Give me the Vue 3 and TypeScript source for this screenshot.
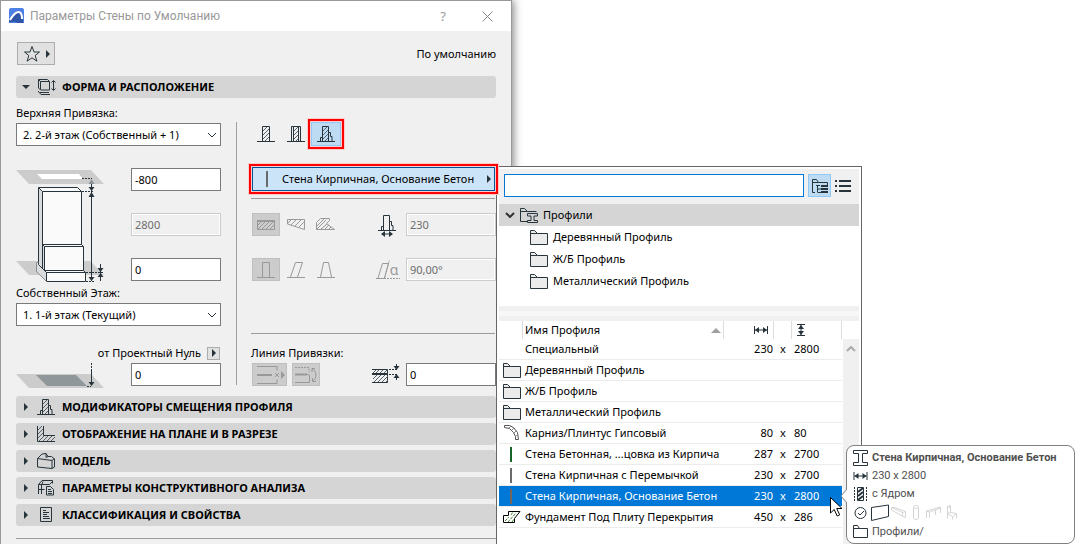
<script setup lang="ts">
import { ref } from 'vue'

interface ProfileRow {
  name: string
  icon: 'none' | 'folder' | 'cornice' | 'slab' | 'bar-green' | 'bar-grey' | 'bar-brick'
  w?: number
  h?: number
}

const topLink = ref('2. 2-й этаж (Собственный + 1)')
const homeStory = ref('1. 1-й этаж (Текущий)')
const topOffset = ref('-800')
const wallHeight = ref('2800')
const baseOffset = ref('0')
const baseElevation = ref('0')
const thickness = ref('230')
const angle = ref('90,00°')
const lineOffset = ref('0')
const query = ref('')
const selected = ref('Стена Кирпичная, Основание Бетон')

const sections = [
  { icon: 'i-profile', title: 'МОДИФИКАТОРЫ СМЕЩЕНИЯ ПРОФИЛЯ' },
  { icon: 'i-plan', title: 'ОТОБРАЖЕНИЕ НА ПЛАНЕ И В РАЗРЕЗЕ' },
  { icon: 'i-model', title: 'МОДЕЛЬ' },
  { icon: 'i-analysis', title: 'ПАРАМЕТРЫ КОНСТРУКТИВНОГО АНАЛИЗА' },
  { icon: 'i-class', title: 'КЛАССИФИКАЦИЯ И СВОЙСТВА' },
]

const folders = ['Деревянный Профиль', 'Ж/Б Профиль', 'Металлический Профиль']

const rows: ProfileRow[] = [
  { name: 'Специальный', icon: 'none', w: 230, h: 2800 },
  { name: 'Деревянный Профиль', icon: 'folder' },
  { name: 'Ж/Б Профиль', icon: 'folder' },
  { name: 'Металлический Профиль', icon: 'folder' },
  { name: 'Карниз/Плинтус Гипсовый', icon: 'cornice', w: 80, h: 80 },
  { name: 'Стена Бетонная, ...цовка из Кирпича', icon: 'bar-green', w: 287, h: 2700 },
  { name: 'Стена Кирпичная с Перемычкой', icon: 'bar-grey', w: 230, h: 2700 },
  { name: 'Стена Кирпичная, Основание Бетон', icon: 'bar-brick', w: 230, h: 2800 },
  { name: 'Фундамент Под Плиту Перекрытия', icon: 'slab', w: 450, h: 286 },
]
</script>

<template>
  <div class="stage">
    <svg class="sprite" aria-hidden="true">
      <defs>
        <symbol id="i-wall" viewBox="0 0 18 18">
          <path d="M0 16.500h18M5.500 16V1.500h7V16" class="s" />
          <path d="M6 6l4-4M6 10l6-6M6 14l6-6M8 16l4-4" class="t" />
        </symbol>
        <symbol id="i-composite" viewBox="0 0 18 18">
          <path d="M0 16.500h18M4.500 16V1.500h9V16M6.500 2v14M11.500 2v14" class="s" />
          <path d="M7 6l4-4M7 10l4-4M7 14l4-4M9 16l2-2" class="t" />
        </symbol>
        <symbol id="i-profile" viewBox="0 0 18 18">
          <path d="M0 16.500h18M5.500 16V1.500h6V16M12 7.500h1.500v4H15v5M5 12.500H3.500v4" class="s" />
          <path d="M6 6l4-4M6 10l5-5M6 14l5-5M8 16l3-3" class="t" />
        </symbol>
        <symbol id="i-plan" viewBox="0 0 18 18">
          <path d="M.5 1v15.500H18M6.500 1v9.500H18" class="s" />
          <path d="M1 5l4-4M1 9l5-5M1 13l5-5M2 16l5-5M6 16l5-5M10 16l5-5M14 16l4-4" class="t" />
        </symbol>
        <symbol id="i-model" viewBox="0 0 18 18">
          <path d="M.5 6.500L5 2l4-.5 2 3h3.500l3 2.500v8l-2.500 1.500L.5 15zM.5 6.500L15 8.500l2.500-2M15 8.500v8M9 1.500v4l2-1" class="s" />
        </symbol>
        <symbol id="i-analysis" viewBox="0 0 18 18">
          <path d="M1.500 15V5.500L5 1.500h10.500v3M1.500 5.500h11l3-3M4.500 6v9M1.500 10.500h6M5 5l1-2.500" class="s" />
          <path d="M9.500 7.500h4l3 3v5.500h-7z" class="s" /><path d="M11 10.500h3M11 12.500h4M11 14.500h4" class="s" />
        </symbol>
        <symbol id="i-class" viewBox="0 0 18 18">
          <path d="M3.500 1.500h11v14h-11z" class="s" /><path d="M6 4.500h3M6 6.500h6M6 8.500h4M6 10.500h6M6 12.500h7" class="s" />
        </symbol>
        <symbol id="i-shape" viewBox="0 0 20 18">
          <path d="M1.500 1.500h9l2 2v8.500H3.500l-2-2zM1.500 1.500L3.500 3.500v8M3.500 3.500h9M3 14.500h9M1 13l3 3.500h9" class="s" />
          <path d="M16.500 3v9M14.500 4.500l2-2 2 2M14.500 10.500l2 2 2-2" class="s" />
        </symbol>
        <symbol id="i-folder" viewBox="0 0 18 15">
          <path d="M.5 14.500V.500h4l3 3h10v11z" fill="#ebebeb" class="s" /><path d="M.5 3.500h7" class="s" />
        </symbol>
        <symbol id="i-beam" viewBox="0 0 16 16">
          <path d="M.5.500h14v3H9.500v9h5v3H.5v-3h5v-9h-5z" class="s" />
        </symbol>
        <symbol id="i-width" viewBox="0 0 14 8">
          <path d="M.5 0v8M13.500 0v8M1 4h12" class="s" /><path d="M1 4l4-3v6zM13 4L9 1v6z" class="f" />
        </symbol>
        <symbol id="i-arrow-r" viewBox="0 0 4 8"><path d="M0 0l4 4-4 4z" class="f" /></symbol>
        <symbol id="i-chevron" viewBox="0 0 10 6"><path d="M1 1l4 4 4-4" class="s" /></symbol>
      </defs>
    </svg>

    <section class="dialog" aria-label="Параметры Стены по Умолчанию">
      <header class="titlebar">
        <svg class="logo" width="16" height="16" viewBox="0 0 16 16">
          <rect width="15" height="15" rx="2" fill="#4d80e4" />
          <path d="M0 13C3 7 6 3 9 3c3 0 5 4 5 10l1 2H9C5 13 3 14 0 15z" fill="#2e55a8" />
          <path d="M1 12C4 7 7 4 9.500 4c2.500 0 3.500 3 3.500 7" fill="none" stroke="#fff" stroke-width="2" />
        </svg>
        <h1>Параметры Стены по Умолчанию</h1>
        <button class="tb" aria-label="Справка">?</button>
        <button class="tb close" aria-label="Закрыть">
          <svg width="11" height="11" viewBox="0 0 11 11"><path d="M.5.500l10 10M10.500.500l-10 10" stroke="#888" fill="none" /></svg>
        </button>
      </header>

      <div class="body">
        <div class="top">
          <button class="fav" aria-label="Избранное">
            <svg width="18" height="18" viewBox="0 0 18 18"><path d="M9 1.500l2 5.500h5.500l-4.300 3.500 1.700 5.700L9 12.800l-4.900 3.400 1.700-5.700L1.500 7H7z" class="s" /></svg>
            <svg width="4" height="8"><use href="#i-arrow-r" /></svg>
          </button>
          <span>По умолчанию</span>
        </div>

        <button class="section" aria-expanded="true">
          <svg class="mark" width="8" height="4" viewBox="0 0 8 4"><path d="M0 0h8L4 4z" class="f" /></svg>
          <svg width="20" height="18"><use href="#i-shape" /></svg>
          <b>ФОРМА И РАСПОЛОЖЕНИЕ</b>
        </button>

        <div class="panel">
          <div class="left">
            <label for="top-link">Верхняя Привязка:</label>
            <div class="select">
              <select id="top-link" v-model="topLink"><option>{{ topLink }}</option></select>
              <svg width="10" height="6"><use href="#i-chevron" /></svg>
            </div>
            <div class="heights">
              <svg width="90" height="115" viewBox="0 0 90 115">
                <path d="M0 2h75l13 14H13z" fill="#ccc" /><path d="M21 6h42l4 5H26z" fill="#fff" />
                <path d="M0 93h74l14 14H13z" fill="#ccc" />
                <path d="M22.500 19.500h39l4 4V77l2 2v24l2 2v8.500h-39l-10-10v-9h2z" fill="#fafafa" />
                <path d="M22.500 19.500l4 4V78l2 1v25l-6-9zM20.500 94.500l10 10v9l-10-10z" fill="#d8dadb" />
                <path d="M22.500 95V19.500h39l4 4V76.500M22.500 19.500l4 4h39M26.500 23.500V100M26.500 76.500h39l2 2v24h-39M26.500 76.500l2 2h39M28.500 78.500v24M22.500 95v1.500l8 8h39v9h-39v-9M28.500 102.500l2 2M67.500 102.500l2 2" class="s" />
                <path d="M20.500 104v-9.500h2M20.500 103.500l10 10" fill="none" stroke="#899095" />
                <path d="M66 10.500h10M66 23.500h12M70 113.500h9M70 104.500h18" class="d" />
                <path d="M75.500 12v101M84.500 96v17" class="s" />
                <path d="M75.500 11l3 5h-6z" fill="#8c9499" /><path d="M72.500 19h6l-3 4zM75.500 24l3 5h-6zM72.500 109h6l-3 4zM81.500 100h6l-3 4zM84.500 105l3 4h-6z" class="f" />
              </svg>
              <div class="stack">
                <input v-model="topOffset" aria-label="Смещение верха">
                <input v-model="wallHeight" aria-label="Высота" disabled>
                <input v-model="baseOffset" aria-label="Смещение низа">
              </div>
            </div>
            <label for="home-story" class="home">Собственный Этаж:</label>
            <div class="select">
              <select id="home-story" v-model="homeStory"><option>{{ homeStory }}</option></select>
              <svg width="10" height="6"><use href="#i-chevron" /></svg>
            </div>
            <div class="zero">
              <label for="elev">от Проектный Нуль</label>
              <button aria-label="Выбрать уровень"><svg width="4" height="8"><use href="#i-arrow-r" /></svg></button>
            </div>
            <div class="elev">
              <svg width="90" height="25" viewBox="0 0 90 25">
                <path d="M0 11h75l13 14H13z" fill="#ccc" /><path d="M20 12h40l11 11H31z" fill="#90979b" />
                <path d="M75.500 0v8M71 23.500h4" class="d" /><path d="M75.500 8v14" class="s" /><path d="M72.500 19h6l-3 4z" class="f" />
              </svg>
              <input id="elev" v-model="baseElevation">
            </div>
          </div>

          <div class="rule" />

          <div class="right">
            <div class="types">
              <button aria-label="Прямая"><svg width="18" height="18"><use href="#i-wall" /></svg></button>
              <button aria-label="Многослойная"><svg width="18" height="18"><use href="#i-composite" /></svg></button>
              <button class="on framed" aria-label="Сложный профиль" aria-pressed="true"><svg width="18" height="18"><use href="#i-profile" /></svg></button>
            </div>
            <button class="profile framed">
              <i class="bar" />
              <span>{{ selected }}</span>
              <svg width="4" height="8"><use href="#i-arrow-r" /></svg>
            </button>
            <hr>
            <div class="line first">
              <div class="tools faded">
                <button class="on" aria-label="Постоянная толщина" disabled><svg width="18" height="18" viewBox="0 0 18 18"><path d="M.5 4.500h17v9H.5z" class="s" /><path d="M0 5h18" stroke-width="2" class="s" /><path d="M1 9l3-3M1 13l7-7M5 13l7-7M9 13l7-7M13 13l4-4" class="t" /></svg></button>
                <button aria-label="Трапеция" disabled><svg width="18" height="18" viewBox="0 0 18 18"><path d="M.5 3.500h17v10L.5 8z" class="s" /><path d="M1 7l3-3M4 9l5-5M8 10l6-6M12 11l5-5" class="t" /></svg></button>
                <button aria-label="Многоугольник" disabled><svg width="20" height="18" viewBox="0 0 20 18"><path d="M.5 13.500v-7l4-4h9v2l-3 3 8 6z" class="s" /><path d="M1 10l7-7M1 13l9-9M5 13l6-5M9 13l4-4M13 13l2-2" class="t" /></svg></button>
              </div>
              <svg class="mid" width="30" height="24" viewBox="0 0 30 24"><path d="M6 17.500h18M11.500 17V2.500h6V17M18 8.500h1.500v4H21V17M11 13.500H9.500V17" class="s" /><path d="M10 21h10" class="s" /><path d="M9 21l4-3v6zM21 21l-4-3v6z" class="f" /></svg>
              <input v-model="thickness" aria-label="Толщина" disabled>
            </div>
            <div class="line">
              <div class="tools faded">
                <button class="on" aria-label="Вертикальная" disabled><svg width="18" height="18" viewBox="0 0 18 18"><path d="M0 16.500h18M5.500 16V1.500h7V16" class="s" /></svg></button>
                <button aria-label="Наклонная" disabled><svg width="18" height="18" viewBox="0 0 18 18"><path d="M0 16.500h18M3.500 16L8.500 1.500h7L10.500 16" class="s" /></svg></button>
                <button aria-label="Двойной наклон" disabled><svg width="18" height="18" viewBox="0 0 18 18"><path d="M0 16.500h18M3.500 16L6.500 1.500h5l3 14.500" class="s" /></svg></button>
              </div>
              <div class="mid alpha faded">
                <svg width="24" height="22" viewBox="0 0 24 22"><path d="M0 19.500h10M2 19L6.500 4.500h6L8.500 19" class="s" /><path d="M11 19.500h13M8.500 19l5-18" class="d" /></svg>
                <span>α</span>
              </div>
              <input v-model="angle" aria-label="Угол наклона" disabled>
            </div>
            <hr class="low">
            <label for="ref-line">Линия Привязки:</label>
            <div class="line last">
              <div class="tools faded">
                <button class="on wide" aria-label="Положение линии привязки" disabled><svg width="30" height="20" viewBox="0 0 30 20"><path d="M2 1.500h20v4M2 18.500h20v-4" class="s" /><path d="M2 10h15" stroke-width="2" class="s" /><path d="M20 8l4 4M24 8l-4 4" class="s" /><path d="M26 6l4 4-4 4z" class="f" /></svg></button>
                <button class="on" aria-label="Перевернуть" disabled><svg width="24" height="20" viewBox="0 0 24 20"><path d="M1 2.500h14v5" class="d" /><path d="M1 9.500h14M15.500 10v7.500H1M18 4c5 1 5 10 1 12M18 7V3.500h3M22 16.500h-3.500V13" class="s" /><path d="M1 9.500h12" stroke-width="2" class="s" /></svg></button>
              </div>
              <svg class="mid" width="30" height="22" viewBox="0 0 30 22"><path d="M0 5.500h15.500v13H0" class="s" /><path d="M0 10h16" stroke-width="2" class="s" /><path d="M1 9l3-3M4 9l3-3M8 9l3-3M12 9l3-3M1 15l4-4M2 18l7-7M6 18l7-7M10 18l6-6M14 18l2-2" class="t" /><path d="M17 5.500h8M17 10.500h8" class="d" /><path d="M24.500 0v4M24.500 11v5" class="s" /><path d="M21.500 2h6l-3 4zM24.500 10l3 4h-6z" class="f" /></svg>
              <input id="ref-line" v-model="lineOffset">
            </div>
          </div>
        </div>

        <div class="sections">
          <button v-for="s in sections" :key="s.title" class="section" aria-expanded="false">
            <svg class="mark" width="4" height="8"><use href="#i-arrow-r" /></svg>
            <svg width="20" height="18"><use :href="'#' + s.icon" width="18" height="18" /></svg>
            <b>{{ s.title }}</b>
          </button>
        </div>
        <hr class="foot">
      </div>
    </section>

    <section class="popup" aria-label="Профили">
      <div class="search">
        <input v-model="query" aria-label="Поиск">
        <button class="view on" aria-label="Дерево">
          <svg width="18" height="16" viewBox="0 0 18 16"><path d="M4 14.500H1.500v-13h4l2 3h9M1.500 4.500h6M16.500 4.500v3" class="s" /><path d="M5 7.500h4M6.500 7v7.500M7 11h3M7 14.500h3" class="s" /><path d="M10 8h7M10 11h7M10 14h7" stroke-width="2" class="s" /></svg>
        </button>
        <button class="view" aria-label="Список">
          <svg width="16" height="12" viewBox="0 0 16 12"><path d="M0 1h2M0 6h2M0 11h2M4 1h12M4 6h12M4 11h12" stroke-width="2" class="s" /></svg>
        </button>
      </div>
      <div class="root">
        <svg width="10" height="6" viewBox="0 0 10 6"><path d="M1 1l4 4 4-4" fill="none" stroke="#333" stroke-width="2" /></svg>
        <svg width="19" height="17" viewBox="0 0 19 17"><path d="M7 14.500H.500v-13h4l3 3h9M.5 4.500h7" class="s" /><path d="M7.500 6.500h10v2.500h-3.500v4.500h3.500v2h-10v-2h3.500V9H7.500z" class="s" /></svg>
        <span>Профили</span>
      </div>
      <ul>
        <li v-for="f in folders" :key="f"><svg width="18" height="15"><use href="#i-folder" /></svg><span>{{ f }}</span></li>
      </ul>
      <div class="splitter" />
      <div class="list">
        <table>
          <colgroup><col class="c1"><col><col class="c3"><col class="c4"><col class="c5"></colgroup>
          <thead>
            <tr>
              <th />
              <th><div class="name">Имя Профиля<svg width="10" height="5" viewBox="0 0 10 5"><path d="M5 0l5 5H0z" fill="#a0a0a0" /></svg></div></th>
              <th class="num"><svg width="14" height="8"><use href="#i-width" /></svg></th>
              <th />
              <th class="hh"><svg width="8" height="12" viewBox="0 0 8 12"><path d="M0 .500h8M0 11.500h8M4 1v10" class="s" /><path d="M4 1l3 4H1zM4 11l3-4H1z" class="f" /></svg></th>
            </tr>
          </thead>
          <tbody>
            <tr v-for="r in rows" :key="r.name" :class="{ picked: r.name === selected }">
              <td class="ic">
                <svg v-if="r.icon === 'folder'" width="18" height="15"><use href="#i-folder" /></svg>
                <svg v-else-if="r.icon === 'cornice'" width="18" height="16" viewBox="0 0 18 16"><path d="M1.500.500h5l4 2 4 5 1 7h-3v-3l-2-4-4-4-5-1z" fill="#fff" stroke="#555" /><path d="M6 3l2-2M9 5l2-2M11 8l2-2M13 11l2-1" stroke="#888" /></svg>
                <svg v-else-if="r.icon === 'slab'" width="18" height="12" viewBox="0 0 18 12"><path d="M17 .500H5.500v4h-5v7h11v-4l5.500-7z" fill="#fff" stroke="#000" /><path d="M2 10l4-4M5 11l8-9M9 11l2-3M8 4l2-3" stroke="#4a8a3a" stroke-dasharray="3 1" /></svg>
                <i v-else-if="r.icon !== 'none'" class="bar" :class="r.icon" />
              </td>
              <td>{{ r.name }}</td>
              <td class="num">{{ r.w }}</td>
              <td class="x">{{ r.w ? 'x' : '' }}</td>
              <td class="hh">{{ r.h }}</td>
            </tr>
          </tbody>
        </table>
        <div class="scroll"><svg width="10" height="6" viewBox="0 0 10 6"><path d="M1 5l4-4 4 4" fill="none" stroke="#aaa" stroke-width="2" /></svg></div>
      </div>

      <aside class="tip" role="tooltip">
        <svg class="beak" width="7" height="14" viewBox="0 0 7 14"><path d="M7 0L1 7l6 7" fill="#fff" stroke="#808080" /></svg>
        <div><svg width="16" height="16"><use href="#i-beam" /></svg><b>{{ selected }}</b></div>
        <div><svg width="16" height="8" viewBox="0 0 16 8"><use href="#i-width" width="15" height="8" /></svg><span>230 x 2800</span></div>
        <div><svg width="16" height="14" viewBox="0 0 16 14"><path d="M1.500 0v14M13.500 0v14" class="d" /><path d="M4.500.500h6v13h-6z" class="s" /><path d="M5 5l5-4M5 9l5-4M5 13l5-4" stroke-width="2" class="s" /></svg><span>с Ядром</span></div>
        <div class="uses">
          <svg width="16" height="14" viewBox="0 0 16 14"><circle cx="7.500" cy="7" r="5.500" class="s" /><path d="M5 7l2 2 4-4" class="s" /></svg>
          <svg width="18" height="18" viewBox="0 0 18 18"><path d="M.5 3.500L17.500 1v11.500L.5 16.500z" class="s" /></svg>
          <svg class="ghost" width="70" height="18" viewBox="0 0 70 18">
            <path d="M.5 3.500h3l11 4v6L11 12 .5 6zM.5 3.500l11 5 3-1M11.500 8.500V12" class="s" />
            <path d="M22.500 3c0-2 5-2 5 0v11c0 2-5 2-5 0zM22.500 3c1 2 4 2 5 0" class="s" />
            <path d="M35.500 14V7l14-4v6M35.500 7l3 1 11-4M38.500 8v6M44.500 6v5" class="s" />
            <path d="M56.500 2.500l3-1v7l6 1v5M56.500 2.500v12M56.500 9.500l5 3 4-3M61.500 12.500v3M59.500 8.500l-3 1M56.500 2.500l3 1" class="s" />
          </svg>
        </div>
        <div><svg width="16" height="14" viewBox="0 0 16 14"><path d="M.5 12.500V.500h4l2 3h8v9zM.5 3.500h6" class="s" /></svg><span>Профили/</span></div>
      </aside>

      <svg class="cursor" width="13" height="20" viewBox="0 0 13 20"><path d="M.5.500v15.500l3.700-3.500 3 6.500 2.500-1.200-3-6.300h5.300z" fill="#fff" stroke="#000" /></svg>
    </section>
  </div>
</template>

<style>
body {
  margin: 0;
  background: #fff;
}
</style>

<style scoped>
.stage {
  position: relative;
  display: grid;
  grid-template-columns: 512fr 563fr;
  min-height: 100vh;
  overflow: hidden;
  font: 11px/16px "Noto Sans", "Open Sans", sans-serif;
  color: #000;
}
.stage *, .stage *::before { box-sizing: border-box; }
.sprite { position: absolute; width: 0; height: 0; }
svg { display: block; flex: none; }
.s { stroke: #27343b; fill: none; }
#i-folder .s:first-child { fill: #ebebeb; }
.t { stroke: #56616a; fill: none; }
.d { stroke: #27343b; fill: none; stroke-dasharray: 2 1; }
.f { fill: #27343b; }
button, input, select { font: inherit; color: inherit; margin: 0; border-radius: 0; }
button { padding: 0; border: 0; background: none; }
hr { margin: 0; border: 0; border-top: 1px solid #9c9c9c; }
label { display: block; }

.dialog {
  border: 1px solid #999;
  border-bottom: 0;
  background: #f0f0f0;
  box-shadow: 2px 0 8px rgba(0, 0, 0, .45);
}
.titlebar {
  display: flex;
  align-items: center;
  height: 30px;
  padding: 0 17px 0 8px;
  background: #fff;
  color: #999;
}
.titlebar h1 { flex: 1; margin: 0 0 0 5px; font: 400 12px/16px Roboto, sans-serif; }
.tb { font-size: 13px; width: 12px; }
.close { margin-left: 33px; }

.body { padding: 11px 15px 0; }
.top { display: flex; align-items: center; justify-content: space-between; height: 23px; margin-bottom: 11px; }
.fav {
  display: flex;
  align-items: center;
  gap: 5px;
  height: 23px;
  margin-left: 1px;
  padding: 0 4px 0 5px;
  border: 1px solid #adadad;
  background: #e1e1e1;
}
.section {
  display: flex;
  align-items: center;
  width: 100%;
  height: 22px;
  border-radius: 3px;
  background: #d5d5d5;
  padding-left: 6px;
  text-align: left;
}
.section .mark { width: 8px; margin-right: 7px; }
.section b { margin-left: 5px; }
.section[aria-expanded="true"] .mark { height: 4px; }
.sections { display: grid; gap: 5px; }
.foot { margin-top: 12px; }

.panel { display: grid; grid-template-columns: 205fr 30px 245fr; }
.left { padding: 7px 0 10px; }
.select { position: relative; margin-top: 2px; }
.select svg { position: absolute; right: 4px; top: 9px; }
select {
  display: block;
  appearance: none;
  width: 100%;
  height: 23px;
  padding: 0 16px 0 6px;
  border: 1px solid #7a7a7a;
  background: #fff;
}
input {
  display: block;
  width: 90px;
  height: 23px;
  padding: 0 3px;
  border: 1px solid #7a7a7a;
  background: #fff;
  outline: 0;
}
input:disabled { border-color: #ccc; background: #f0f0f0; color: #6d6d6d; box-shadow: inset 0 0 0 1px #fff; }
.heights { display: flex; justify-content: space-between; height: 113px; margin-top: 22px; }
.stack { display: grid; gap: 22px; }
.home { margin-top: 4px; }
.zero { display: flex; justify-content: flex-end; align-items: center; gap: 6px; margin-top: 19px; }
.zero button {
  display: grid;
  place-items: center;
  width: 13px;
  height: 13px;
  margin-right: 1px;
  border: 1px solid #adadad;
  background: #e1e1e1;
}
.elev { display: flex; justify-content: space-between; height: 23px; margin-top: 2px; }
.rule { width: 1px; margin: 24px auto 11px 15px; background: #a0a0a0; }

.right { padding: 24px 0 10px; }
.types { display: flex; height: 24px; }
.types button { display: grid; place-items: center; width: 30px; }
.types .on, .view.on { border: 1px solid #90c8f6; background: #bddcf4; }
.framed { position: relative; z-index: 3; outline: 2px solid #f00; outline-offset: 1px; box-shadow: 0 0 0 4px #fcc; }
.profile {
  display: flex;
  align-items: center;
  width: calc(100% - 2px);
  height: 24px;
  margin: 21px 1px 0;
  padding: 0 3px 0 13px;
  border: 1px solid #00549a;
  background: #cce4f7;
}
.profile span { flex: 1; margin-left: 14px; text-align: left; white-space: nowrap; }
.bar { display: block; width: 2px; height: 16px; background: #6b6b6b; }
.bar-green { background: #16662a; }
.bar-brick { background: #75655c; }
.right hr { margin: 7px 1px 0 0; }
.line { display: flex; justify-content: space-between; align-items: center; height: 23px; margin-top: 22px; }
.line input { flex: none; }
.line.first { margin-top: 14px; }
.line.last { margin-top: 2px; }
.right .low { margin-top: 52px; margin-bottom: 11px; }
.tools { display: flex; gap: 2px; width: 116px; margin-left: 1px; }
.tools button { display: grid; place-items: center; flex: none; width: 28px; height: 23px; }
.tools .on { border: 1px solid #bfbfbf; background: #ccc; }
.tools .wide { width: 35px; margin-right: 3px; }
.faded .s, .faded .t, .faded .d { stroke: #999; }
.faded .f { fill: #999; }
.mid { width: 30px; }
.alpha { display: flex; align-items: center; justify-content: center; color: #999; font-size: 14px; }
.alpha span { margin-left: -10px; }

.popup {
  position: absolute;
  left: calc(100% * 512 / 1075 - 16px);
  top: 166px;
  bottom: -4px;
  width: 366px;
  padding: 2px;
  border: 1px solid #666;
  background: #fff;
  z-index: 2;
}
.search { display: flex; align-items: flex-start; height: 35px; padding: 5px; background: #f0f0f0; }
.search input { flex: 1; border-color: #0078d7; }
.view { display: grid; place-items: center; width: 23px; height: 23px; }
.view.on { margin-left: 4px; }
.root { display: flex; align-items: center; height: 22px; padding-left: 6px; background: #d5d5d5; }
.root svg + svg { margin: 0 4px 0 5px; }
ul { list-style: none; margin: 0; padding: 0; height: 80px; }
li { display: flex; align-items: center; gap: 5px; height: 22px; padding-left: 31px; }
.splitter { height: 15px; background: #f7f7f7; border: solid #f0f0f0; border-width: 5px 0; }
.list { display: flex; align-items: flex-start; }
table { flex: 1; table-layout: fixed; width: 0; border-spacing: 0; }
.c1 { width: 24px; }
.c3, .c5 { width: 50px; }
.c4 { width: 18px; }
th { height: 18px; padding: 0; border-right: 1px solid #ddd; font-weight: 400; text-align: left; }
.name { display: flex; align-items: center; justify-content: space-between; padding: 0 2px; }
td { height: 21px; padding: 0 0 0 2px; border-bottom: 1px solid #ececec; line-height: 16px; white-space: nowrap; }
th.num svg { margin: 0 5px 0 auto; }
th.hh svg { margin-left: 5px; }
td.num { text-align: right; padding-right: 1px; }
td.x { text-align: center; padding: 0; }
td.ic { padding: 0 0 0 4px; }
.ic .bar { margin-left: 7px; height: 15px; }
.picked td { background: #0078d7; color: #fff; background-clip: padding-box; }
.scroll { width: 16px; height: 208px; margin: 18px 0 0 1px; padding-top: 7px; background: #f0f0f0; }
.scroll svg { margin: 0 auto; }

.tip {
  position: absolute;
  left: 349px;
  top: 278px;
  width: 229px;
  height: 99px;
  padding: 3px 6px;
  border: 1px solid #808080;
  border-radius: 8px;
  background: #fff;
  color: #505050;
  font: 11px/16px Roboto, sans-serif;
  white-space: nowrap;
}
.tip > div { display: flex; align-items: center; gap: 3px; height: 18px; }
.tip > .uses { height: 20px; gap: 2px; }
.beak { position: absolute; left: -7px; top: 43px; }
.ghost { opacity: .2; }
.cursor { position: absolute; left: 333px; top: 330px; }
</style>
